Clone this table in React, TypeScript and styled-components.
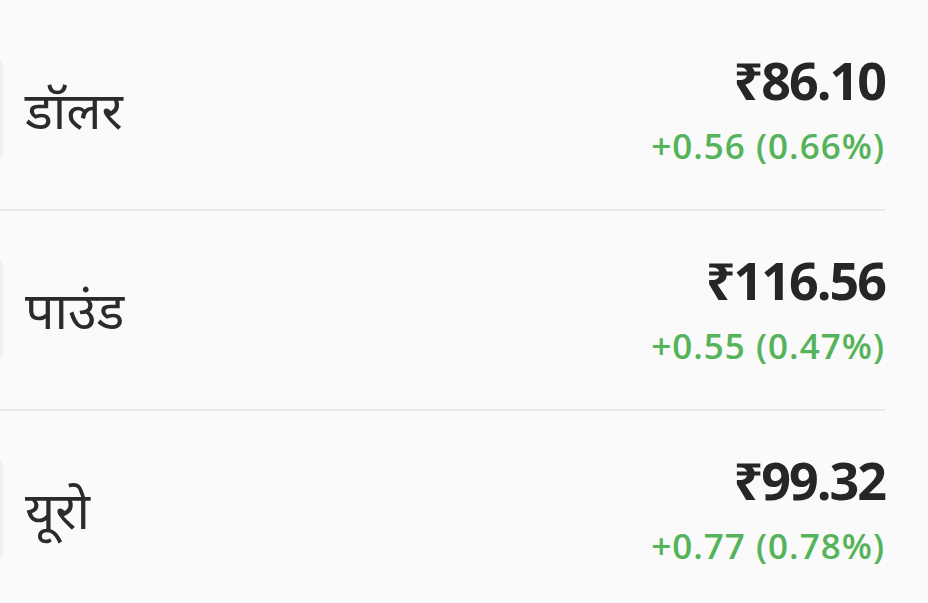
import React from "react";
import styled, { createGlobalStyle } from "styled-components";

const GlobalStyle = createGlobalStyle`
  html, body {
    margin: 0;
    padding: 0;
    background: #fafafa;
    overflow: hidden;
  }
  body {
    font-family: "Open Sans", "Noto Sans", sans-serif;
  }
`;

const List = styled.div`
  width: 928px;
  height: 603px;
  padding-top: 11px;
  box-sizing: border-box;
  background: #fafafa;
  overflow: hidden;
`;

const Row = styled.div`
  display: flex;
  align-items: center;
  height: 198px;
  margin-right: 43px;
  border-bottom: 2px solid #e8e8e8;
  &:last-child {
    border-bottom: none;
  }
`;

const IconBox = styled.div`
  flex: none;
  width: 103px;
  height: 102px;
  margin-left: -100px;
  border-radius: 8px;
  background: #efefef;
`;

const Name = styled.div`
  flex: 1;
  margin-left: 22px;
  margin-top: 12px;
  font-family: "Noto Sans Devanagari", "Noto Sans", sans-serif;
  font-size: 52px;
  color: #2b2b2b;
  line-height: 1;
`;

const Values = styled.div`
  display: flex;
  flex-direction: column;
  align-items: flex-end;
`;

const Price = styled.div`
  font-family: "Open Sans", "Noto Sans", sans-serif;
  font-weight: 700;
  font-size: 52px;
  line-height: 60px;
  color: #262626;
  letter-spacing: -2px;
`;

const Change = styled.div<{ $up: boolean }>`
  margin-top: 12px;
  font-family: "Open Sans", "Noto Sans", sans-serif;
  font-weight: 600;
  font-size: 35px;
  line-height: 48px;
  letter-spacing: 1px;
  color: ${(p) => (p.$up ? "#55b35a" : "#e53935")};
`;

const rates = [
  { name: "डॉलर", price: "₹86.10", change: "+0.56 (0.66%)" },
  { name: "पाउंड", price: "₹116.56", change: "+0.55 (0.47%)" },
  { name: "यूरो", price: "₹99.32", change: "+0.77 (0.78%)" },
];

export default function App() {
  return (
    <>
      <GlobalStyle />
      <List>
        {rates.map((r) => (
          <Row key={r.name}>
            <IconBox />
            <Name>{r.name}</Name>
            <Values>
              <Price>{r.price}</Price>
              <Change $up>{r.change}</Change>
            </Values>
          </Row>
        ))}
      </List>
    </>
  );
}
